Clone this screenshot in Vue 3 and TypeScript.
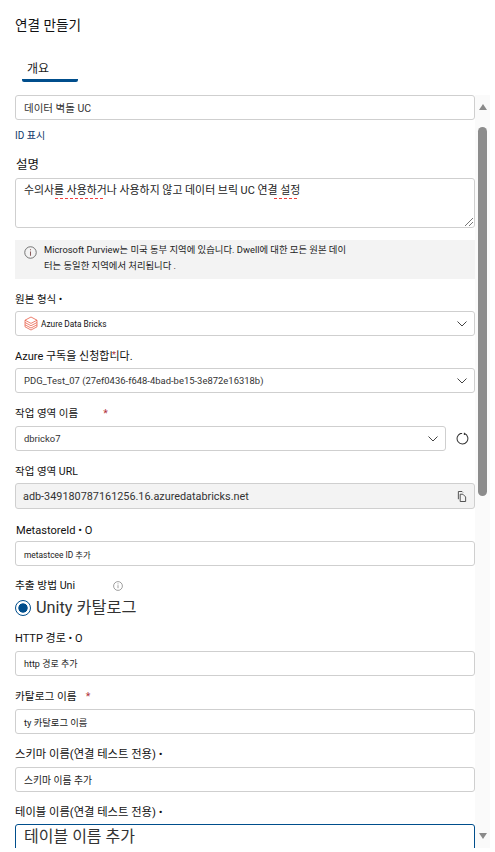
<script setup lang="ts">
const spellMarks: { left: number; width: number }[] = [
  { left: 39, width: 50 },
  { left: 258, width: 23 },
]
</script>

<template>
  <div class="page">
    <h1 class="title">연결 만들기</h1>
    <div class="tabs"><span class="tab">개요</span></div>
    <div class="body">
      <form class="form" @submit.prevent>
        <div class="box t11">데이터 벽돌 UC</div>
        <a class="idlink">ID 표시</a>

        <label class="lb desc-lb">설명</label>
        <div class="area">
          <span>수의사를 사용하거나 사용하지 않고 데이터 브릭 UC 연결 설정</span>
          <i v-for="m in spellMarks" :key="m.left" class="sp" :style="{ left: m.left + 'px', width: m.width + 'px' }"></i>
          <svg class="grip" width="8" height="8" viewBox="0 0 8 8"><path d="M0 8 8 0M4 8l4-4" stroke="#777" stroke-width="1" fill="none"/></svg>
        </div>

        <div class="info">
          <svg class="info-ic" width="13" height="13" viewBox="0 0 14 14"><circle cx="7" cy="7" r="6.2" fill="none" stroke="#6b6b6b"/><path d="M7 6v4.4M7 3.4v1.2" stroke="#8a5a5a" stroke-width="1.1"/></svg>
          <p>Microsoft Purview는 미국 동부 지역에 있습니다. Dwell에 대한 모든 원본 데이<br>터는 동일한 지역에서 처리됩니다 .</p>
        </div>

        <label class="lb l1">원본 형식 •</label>
        <div class="box sel mt4">
          <span class="src">
            <svg width="14" height="15" viewBox="0 0 14 15" fill="none" stroke="#e8604a" stroke-width=".8"><path d="M7 1 1 4.2l6 3.2 6-3.2zM1 6.5l6 3.2 6-3.2M1 8.8 7 12l6-3.2M1 4.2v6.6L7 14l6-3.2V4.2"/></svg>
            <span class="t9">Azure Data Bricks</span>
          </span>
          <svg class="chev" width="10" height="6" viewBox="0 0 10 6"><path d="M.5.5 5 5 9.500.5" fill="none" stroke="#444" stroke-width="1"/></svg>
        </div>

        <label class="lb l2">Azure 구독을 신청합니다.</label>
        <div class="box sel mt4 t11b">
          <span>PDG_Test_07 (27ef0436-f648-4bad-be15-3e872e16318b)</span>
          <svg class="chev" width="10" height="6" viewBox="0 0 10 6"><path d="M.5.5 5 5 9.500.5" fill="none" stroke="#444" stroke-width="1"/></svg>
        </div>

        <label class="lb l3">작업 영역 이름<span class="star s1">*</span></label>
        <div class="with-btn">
          <div class="box sel grow t11b">
            <span>dbricko7</span>
            <svg class="chev" width="10" height="6" viewBox="0 0 10 6"><path d="M.5.5 5 5 9.500.5" fill="none" stroke="#444" stroke-width="1"/></svg>
          </div>
          <svg class="refresh" width="13" height="13" viewBox="0 0 14 14"><path d="M5 1.600a5.800 5.800 0 1 0 4.200.1M9 .8v2.400M4 1.600h2.600" fill="none" stroke="#333" stroke-width="1.100"/></svg>
        </div>

        <label class="lb l4">작업 영역 URL</label>
        <div class="box ro mt4">
          <span>adb-349180787161256.16.azuredatabricks.net</span>
          <svg width="10" height="11" viewBox="0 0 11 12" fill="none" stroke="#444"><path d="M3.500 3.500h3l3 3v5h-6zM1.500 9V.5h4l1 1"/></svg>
        </div>

        <label class="lb meta">MetastoreId • O</label>
        <div class="box t8 mt2">metastcee ID 추가</div>

        <div class="method">
          <label class="lb l5">추출 방법 Uni</label>
          <svg class="mini" width="10" height="10" viewBox="0 0 10 10"><circle cx="5" cy="5" r="4.400" fill="none" stroke="#888" stroke-width=".8"/><path d="M5 4.200v3M5 2.400v1" stroke="#888" stroke-width=".8"/></svg>
        </div>
        <div class="radio"><span class="dot"></span><span>Unity 카탈로그</span></div>

        <label class="lb l6">HTTP 경로 • O</label>
        <div class="box t9 mt5">http 경로 추가</div>

        <label class="lb l7">카탈로그 이름<span class="star s2">*</span></label>
        <div class="box t9b mt5">ty 카탈로그 이름</div>

        <label class="lb l8">스키마 이름(연결 테스트 전용) •</label>
        <div class="box t10 mt5">스키마 이름 추가</div>

        <label class="lb l8">테이블 이름(연결 테스트 전용) •</label>
        <div class="box focus mt4">테이블 이름 추가</div>
      </form>

      <div class="scroll">
        <span class="arrow up"></span>
        <span class="thumb"></span>
        <span class="arrow down"></span>
      </div>
    </div>
  </div>
</template>

<style scoped>
.page {
  width: 495px;
  height: 852px;
  overflow: hidden;
  background: #fff;
  color: #1b1b1b;
  font-family: Roboto, "Noto Sans CJK KR", sans-serif;
  display: flex;
  flex-direction: column;
}
.title { margin: 15px 0 0 15px; font-size: 13.6px; font-weight: 400; line-height: 20px; color: #111; }
.tabs { margin: 24px 0 0 22px; height: 23px; }
.tab { display: block; width: 56px; height: 23px; box-sizing: border-box; padding: 2px 0 0 5px; font-size: 12px; line-height: 16px; border-bottom: 3px solid #004e8c; border-radius: 0 0 2px 2px; }
.body { display: flex; height: 758px; margin-top: 13px; padding-left: 15px; }
.form { width: 460px; flex: none; height: 753px; overflow: hidden; display: flex; flex-direction: column; }
.lb { display: block; font-size: 11px; line-height: 14px; color: #111; }
.box {
  box-sizing: border-box;
  flex: none;
  height: 25px;
  border: 1px solid #cfcfcf;
  border-radius: 3px;
  padding: 0 8px;
  display: flex;
  align-items: center;
  justify-content: space-between;
  background: #fff;
}
.t8 { font-size: 8.400px; color: #222; }
.t9 { font-size: 9px; color: #222; }
.t9b { font-size: 9.300px; color: #222; }
.t10 { font-size: 9.800px; color: #222; }
.t11 { font-size: 10.500px; color: #333; }
.t11b { font-size: 9.450px; color: #333; }
.mt2 { margin-top: 2px; }
.mt4 { margin-top: 4px; }
.mt5 { margin-top: 5px; }
.idlink { margin-top: 9px; font-size: 10px; line-height: 14px; color: #123a6b; }
.desc-lb { margin-top: 14px; font-size: 12.500px; line-height: 16px; padding-left: 1px; }
.area { position: relative; box-sizing: border-box; flex: none; margin-top: 5px; height: 50px; border: 1px solid #cfcfcf; border-radius: 3px; padding: 4px 8px; font-size: 10.900px; line-height: 15px; color: #222; }
.sp { position: absolute; top: 19px; height: 1px; background: repeating-linear-gradient(90deg, #f04040 0 3px, transparent 3px 5px); }
.grip { position: absolute; right: 1px; bottom: 1px; }
.info { flex: none; margin-top: 12px; height: 39px; box-sizing: border-box; background: #f3f3f3; display: flex; align-items: flex-start; padding: 2px 9px 0; gap: 7px; }
.info-ic { margin-top: 4px; flex: none; }
.info p { margin: 0; font-size: 9.350px; line-height: 16px; color: #222; }
.l1 { margin-top: 14px; font-size: 10.500px; }
.src { display: flex; align-items: center; gap: 3px; }
.src .t9 { font-size: 8.300px; color: #111; }
.sel { padding-right: 7px; }
.chev { flex: none; }
.l2 { position: relative; margin-top: 13px; font-size: 11px; line-height: 15px; }
.l2::after { content: "*"; position: absolute; left: 97px; top: -1px; font-size: 9px; color: #b0303a; }
.l3 { margin-top: 14px; font-size: 10.500px; }
.s1 { margin-left: 25px; }
.star { color: #b0303a; }
.with-btn { display: flex; align-items: center; margin-top: 5px; flex: none; }
.grow { width: 431px; }
.refresh { margin-left: 10px; }
.l4 { margin-top: 14px; font-size: 10.500px; }
.ro { background: #f3f3f3; font-size: 10.850px; color: #333; height: 26px; padding: 0 7px; }
.meta { margin-top: 14px; font-size: 11.100px; line-height: 16px; padding-left: 1px; }
.method { display: flex; align-items: center; margin-top: 13px; flex: none; }
.l5 { font-size: 10.700px; width: 85px; }
.mini { margin-left: 13px; flex: none; }
.radio { display: flex; align-items: center; gap: 5px; margin-top: 3px; font-size: 16.300px; line-height: 24px; color: #333; flex: none; }
.dot { width: 16px; height: 16px; box-sizing: border-box; border: 1px solid #004e8c; border-radius: 50%; background: radial-gradient(circle, #004e8c 0 4.300px, #fff 5px); }
.l6 { margin-top: 12px; font-size: 11px; }
.l7 { margin-top: 14px; font-size: 10.700px; }
.s2 { margin-left: 9px; }
.l8 { margin-top: 14px; font-size: 11.300px; }
.focus { height: 30px; border-color: #004e8c; font-size: 16px; align-items: flex-start; line-height: 22px; padding-top: 1px; color: #333; }
.scroll { width: 15px; background: #fafafa; height: 753px; display: flex; flex-direction: column; align-items: center; position: relative; }
.arrow { width: 0; height: 0; border-left: 4.500px solid transparent; border-right: 4.500px solid transparent; position: absolute; }
.up { top: 9px; border-bottom: 6px solid #8a8a8a; }
.down { bottom: 9px; border-top: 6px solid #8a8a8a; }
.thumb { margin-top: 32px; width: 9px; height: 369px; border-radius: 5px; background: #8c8c8c; }
</style>
